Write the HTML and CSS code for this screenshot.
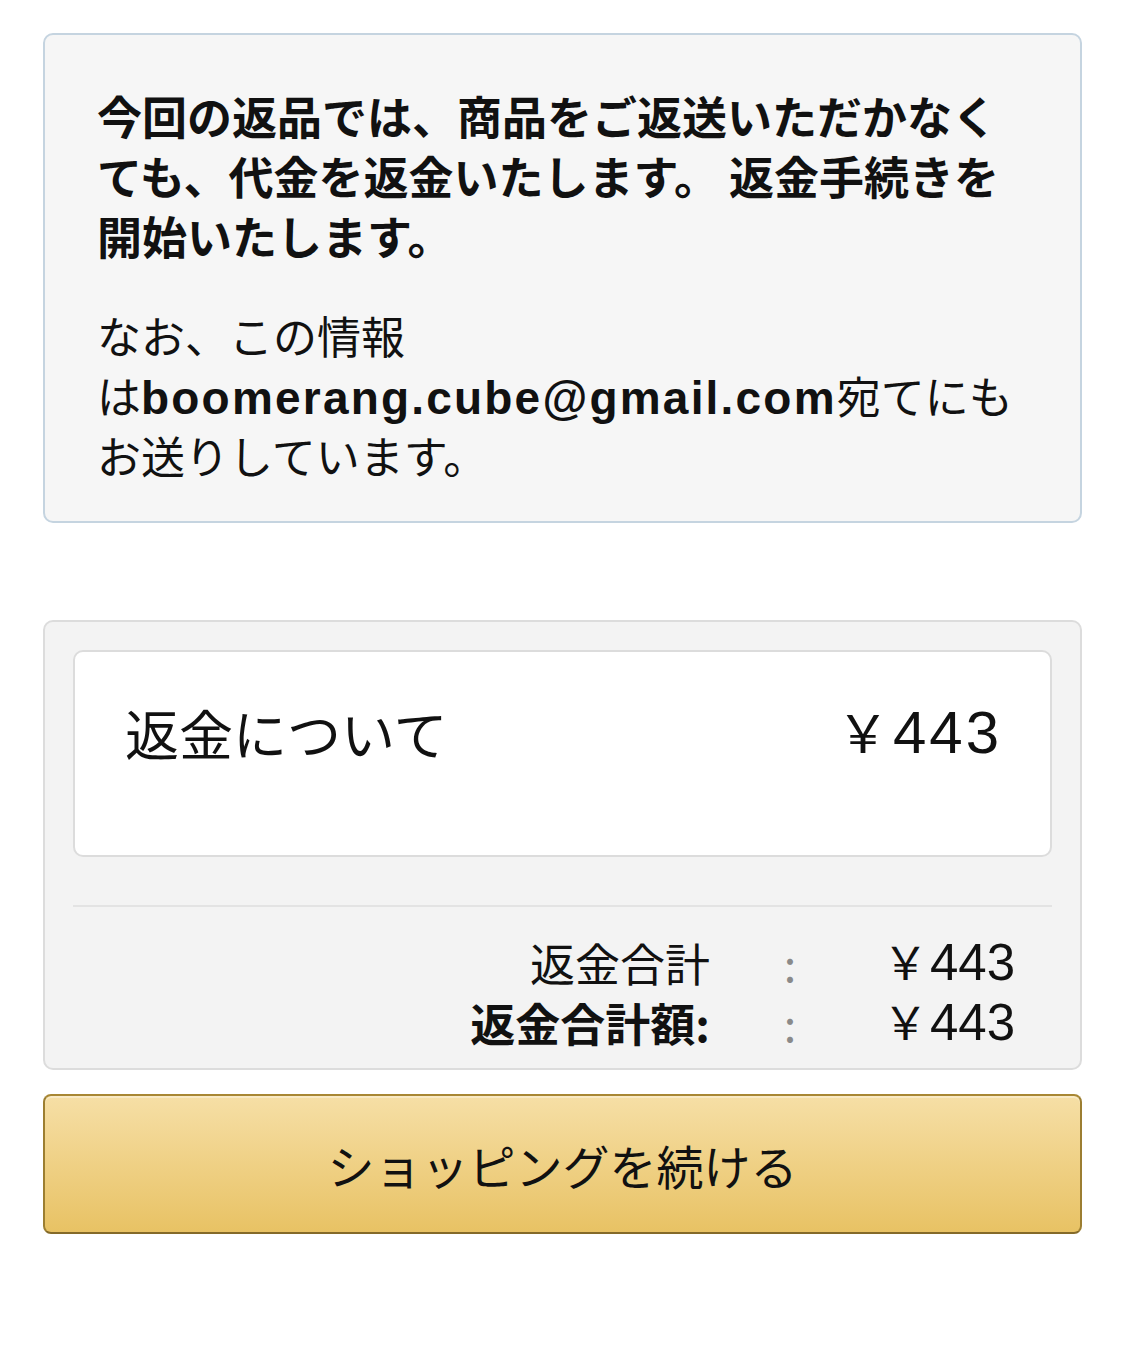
FILE: index.html
```html
<!DOCTYPE html>
<html lang="ja">
<head>
<meta charset="utf-8">
<title>返金について</title>
<link rel="stylesheet" href="styles.css">
</head>
<body>
<div class="page">
  <section class="notice">
    <p class="lead">今回の返品では、商品をご返送いただかなくても、代金を返金いたします。 返金手続きを開始いたします。</p>
    <p class="sub">なお、この情報<span class="nw">は<b class="email">boomerang.cube@gmail.com</b></span>宛てにもお送りしています。</p>
  </section>

  <section class="refund">
    <div class="card">
      <span class="card-title">返金について</span>
      <span class="card-amount"><span class="yen">￥</span>443</span>
    </div>
    <div class="totals">
      <span class="t-label">返金合計</span>
      <span class="t-colon">:</span>
      <span class="t-value"><span class="yen">￥</span>443</span>
      <span class="t-label strong">返金合計額:</span>
      <span class="t-colon">:</span>
      <span class="t-value"><span class="yen">￥</span>443</span>
    </div>
  </section>

  <button class="continue" type="button">ショッピングを続ける</button>
</div>
</body>
</html>
```

FILE: styles.css
```css
html, body {
  margin: 0;
  padding: 0;
  background: #ffffff;
}

body {
  font-family: "Noto Sans CJK JP", "Noto Sans", sans-serif;
  color: #111111;
}

.page {
  padding: 33px 42px 0 43px;
  display: flex;
  flex-direction: column;
}

.notice {
  border: 2px solid #c5d4e0;
  border-radius: 10px;
  background: #f6f6f6;
  padding: 51px 52px 36px 52px;
}

.notice p {
  margin: 0;
}

.lead {
  font-size: 45px;
  font-weight: 700;
  line-height: 60px;
  margin-bottom: 39px !important;
}

.sub {
  font-size: 44px;
  font-weight: 400;
  line-height: 60px;
}

.nw {
  white-space: nowrap;
}

.email {
  font-family: "Liberation Sans", "Noto Sans", sans-serif;
  font-weight: 700;
  font-size: 46px;
  letter-spacing: 2.2px;
  line-height: 1;
}

.refund {
  margin-top: 97px;
  border: 2px solid #dcdcdc;
  border-radius: 10px;
  background: #f3f3f3;
  padding: 28px 28px 15px 28px;
}

.card {
  background: #ffffff;
  border: 2px solid #dcdcdc;
  border-radius: 10px;
  padding: 51px 48px 92px 50px;
  display: flex;
  justify-content: space-between;
  align-items: center;
  font-size: 54px;
  line-height: 60px;
}

.card-amount {
  font-family: "Liberation Sans", "Noto Sans CJK JP", sans-serif;
  font-size: 60px;
  letter-spacing: 3px;
  line-height: 60px;
}

.card-amount .yen {
  font-family: "Noto Sans CJK JP", sans-serif;
  font-size: 52px;
  letter-spacing: 0;
  margin-right: 4px;
  line-height: 1;
}

.totals {
  margin-top: 48px;
  border-top: 2px solid #e3e3e3;
  padding-top: 26px;
  padding-right: 37px;
  display: grid;
  grid-template-columns: 1fr 160px 145px;
  font-size: 45px;
  line-height: 60px;
}

.t-label {
  text-align: right;
}

.t-label.strong {
  font-weight: 700;
}

.t-colon {
  text-align: center;
  color: #8a8a8a;
}

.t-value {
  text-align: right;
  font-family: "Liberation Sans", "Noto Sans CJK JP", sans-serif;
  font-size: 51px;
  line-height: 60px;
}

.t-value .yen {
  font-family: "Noto Sans CJK JP", sans-serif;
  font-size: 45px;
  margin-right: 2px;
  line-height: 1;
}

.continue {
  margin-top: 24px;
  height: 140px;
  border: 2px solid;
  border-color: #a88734 #9c7e31 #846a29;
  border-radius: 8px;
  background: linear-gradient(to bottom, #f6dfa6, #e8c264);
  box-shadow: inset 0 2px 0 rgba(255, 255, 255, 0.35);
  font-family: "Noto Sans CJK JP", "Noto Sans", sans-serif;
  font-size: 47px;
  font-weight: 400;
  color: #111111;
  display: flex;
  align-items: center;
  justify-content: center;
  padding: 0;
}
```
